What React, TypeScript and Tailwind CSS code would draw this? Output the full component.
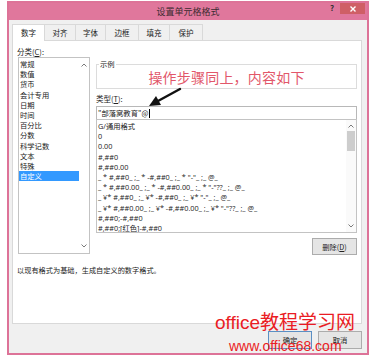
import React from "react";

const CJK = { fontFamily: '"Noto Sans CJK SC", "Liberation Sans", sans-serif' };

function Chevron({ up }: { up?: boolean }) {
  return (
    <svg width="6" height="4" viewBox="0 0 6 4">
      <polyline
        points={up ? "0.5,3.5 3,1 5.5,3.5" : "0.5,0.5 3,3 5.5,0.5"}
        fill="none"
        stroke="#7a7a7a"
        strokeWidth="1"
      />
    </svg>
  );
}

export default function App() {
  const cats = ["常规", "数值", "货币", "会计专用", "日期", "时间", "百分比", "分数", "科学记数", "文本", "特殊", "自定义"];
  const fmts = [
    "G/通用格式",
    "0",
    "0.00",
    "#,##0",
    "#,##0.00",
    '_ * #,##0_ ;_ * -#,##0_ ;_ * "-"_ ;_ @_ ',
    '_ * #,##0.00_ ;_ * -#,##0.00_ ;_ * "-"??_ ;_ @_ ',
    '_ ¥* #,##0_ ;_ ¥* -#,##0_ ;_ ¥* "-"_ ;_ @_ ',
    '_ ¥* #,##0.00_ ;_ ¥* -#,##0.00_ ;_ ¥* "-"??_ ;_ @_ ',
    "#,##0;-#,##0",
    "#,##0;[红色]-#,##0",
  ];
  const tabs = [
    { t: "数字", w: "w-[33px]" },
    { t: "对齐", w: "w-[32px]" },
    { t: "字体", w: "w-[31px]" },
    { t: "边框", w: "w-[34px]" },
    { t: "填充", w: "w-[32px]" },
    { t: "保护", w: "w-[34px]" },
  ];

  return (
    <div className="relative w-[372px] h-[362px] bg-white overflow-hidden text-[#222]" style={CJK}>
      <div className="ml-[7px] mt-[1px] w-[362px] h-[354px] border-2 border-[#dd7398] bg-[#f0f0f0] flex flex-col">
        {/* title bar */}
        <div className="relative h-[17px] bg-[#e0779c] flex items-center justify-center">
          <span className="text-[9px] leading-[10px] text-[#3a2a30]">设置单元格格式</span>
          <span className="absolute left-[321px] top-[1px] text-[8px] leading-[8px] font-bold text-[#333]">?</span>
          <div className="absolute right-[2px] top-0 w-[25px] h-[11px] bg-[#cf5f66] flex items-center justify-center">
            <svg width="6" height="6" viewBox="0 0 6 6">
              <path d="M0.5 0.5 L5.5 5.5 M5.5 0.5 L0.5 5.5" stroke="#fff" strokeWidth="1.4" />
            </svg>
          </div>
        </div>

        {/* tabs */}
        <div className="mt-[4px] pl-[3px] flex h-[16px] relative z-10">
          {tabs.map((tb, i) => (
            <div
              key={tb.t}
              className={
                (i === 0
                  ? "bg-white border-[#d9d9d9] h-[17px] "
                  : "bg-[#f0f0f0] border-[#d9d9d9] h-[16px] -ml-px ") +
                tb.w +
                " border border-b-0 flex items-center justify-center text-[7.5px] leading-[10px]"
              }
            >
              {tb.t}
            </div>
          ))}
        </div>

        {/* panel */}
        <div className="ml-[3px] w-[350px] h-[284px] bg-white border border-[#d9d9d9] flex flex-col pl-[4px]">
          <div className="pt-[6px] text-[7.5px] leading-[10px]">
            分类(<span className="underline">C</span>):
          </div>
          <div className="flex">
            {/* category list */}
            <div className="ml-px w-[72px] h-[197px] border border-[#c3c3c3] flex">
              <div className="flex-1 pt-px">
                {cats.map((c, i) => (
                  <div
                    key={c}
                    className={
                      (i === cats.length - 1 ? "bg-[#3399ff] text-white " : "") +
                      "h-[10.2px] text-[7.3px] leading-[10.2px] pl-[1px]"
                    }
                  >
                    {c}
                  </div>
                ))}
              </div>
              <div className="w-[10px] flex flex-col justify-between items-center py-[5px]">
                <Chevron up />
                <Chevron />
              </div>
            </div>

            {/* right column */}
            <div className="ml-[6px] w-[261px] flex flex-col">
              <div className="relative mt-[7px] h-[25px] border border-[#dcdcdc] flex items-center justify-center">
                <span className="absolute left-[2px] -top-[5px] bg-white px-px text-[7.3px] leading-[9px]">示例</span>
                <span className="text-[14px] leading-[16px] text-[#e2576a] tracking-[0.2px]">操作步骤同上，内容如下</span>
              </div>
              <div className="mt-[5px] text-[7.5px] leading-[10px]">
                类型(<span className="underline">T</span>):
              </div>
              <div className="mt-[2px] h-[14px] border border-[#b8b8b8] flex items-center pl-[1px] text-[7.3px] leading-[10px]">
                <span>"部落窝教育"@</span>
                <span className="ml-px w-px h-[9px] bg-black" />
              </div>
              <div className="-mt-px h-[114px] border border-[#c3c3c3] flex">
                <div className="flex-1 pt-px overflow-hidden">
                  {fmts.map((f) => (
                    <div
                      key={f}
                      className="h-[10.2px] text-[7.3px] leading-[10.2px] pl-[1px] whitespace-pre"
                      style={{ fontFamily: '"Open Sans", "Noto Sans CJK SC", sans-serif' }}
                    >
                      {f}
                    </div>
                  ))}
                </div>
                <div className="w-[10px] flex flex-col items-center py-[4px] bg-[#fafafa]">
                  <Chevron up />
                  <div className="mt-[3px] w-[8px] h-[20px] bg-[#cdcdcd]" />
                  <div className="flex-1" />
                  <Chevron />
                </div>
              </div>
              <div className="mt-[5px] flex justify-end">
                <div className="w-[45px] h-[17px] bg-[#e5e5e5] border border-[#acacac] flex items-center justify-center text-[7.3px] leading-[10px]">
                  删除(<span className="underline">D</span>)
                </div>
              </div>
            </div>
          </div>
          <div className="mt-[10px] text-[7.2px] leading-[10px]">以现有格式为基础，生成自定义的数字格式。</div>
        </div>

        {/* bottom buttons */}
        <div className="mt-[7px] pr-[5px] flex justify-end gap-[6px]">
          <div className="w-[44px] h-[18px] bg-[#e5e5e5] border border-[#5b8fc4] flex items-center justify-center text-[7.3px] leading-[10px]">
            确定
          </div>
          <div className="w-[44px] h-[18px] bg-[#e5e5e5] border border-[#acacac] flex items-center justify-center text-[7.3px] leading-[10px]">
            取消
          </div>
        </div>
      </div>

      {/* annotation arrow */}
      <svg className="absolute left-0 top-0" width="372" height="362" viewBox="0 0 372 362">
        <line x1="180" y1="89" x2="158" y2="101" stroke="#111" strokeWidth="2.4" strokeLinecap="round" />
        <polygon points="149,106 161,105 156,96" fill="#111" />
      </svg>

      {/* watermark */}
      <div
        className="absolute left-[215px] top-[313px] text-[19px] leading-[20px] text-[#ea1c24] whitespace-nowrap"
        style={{ fontFamily: '"Liberation Sans", "Noto Sans CJK SC", sans-serif' }}
      >
        office教程学习网
      </div>
      <div
        className="absolute left-[229px] top-[339px] text-[14px] leading-[14px] text-[#ea1c24] whitespace-nowrap"
        style={{ fontFamily: '"Liberation Sans", sans-serif' }}
      >
        www.office68.com
      </div>
    </div>
  );
}
